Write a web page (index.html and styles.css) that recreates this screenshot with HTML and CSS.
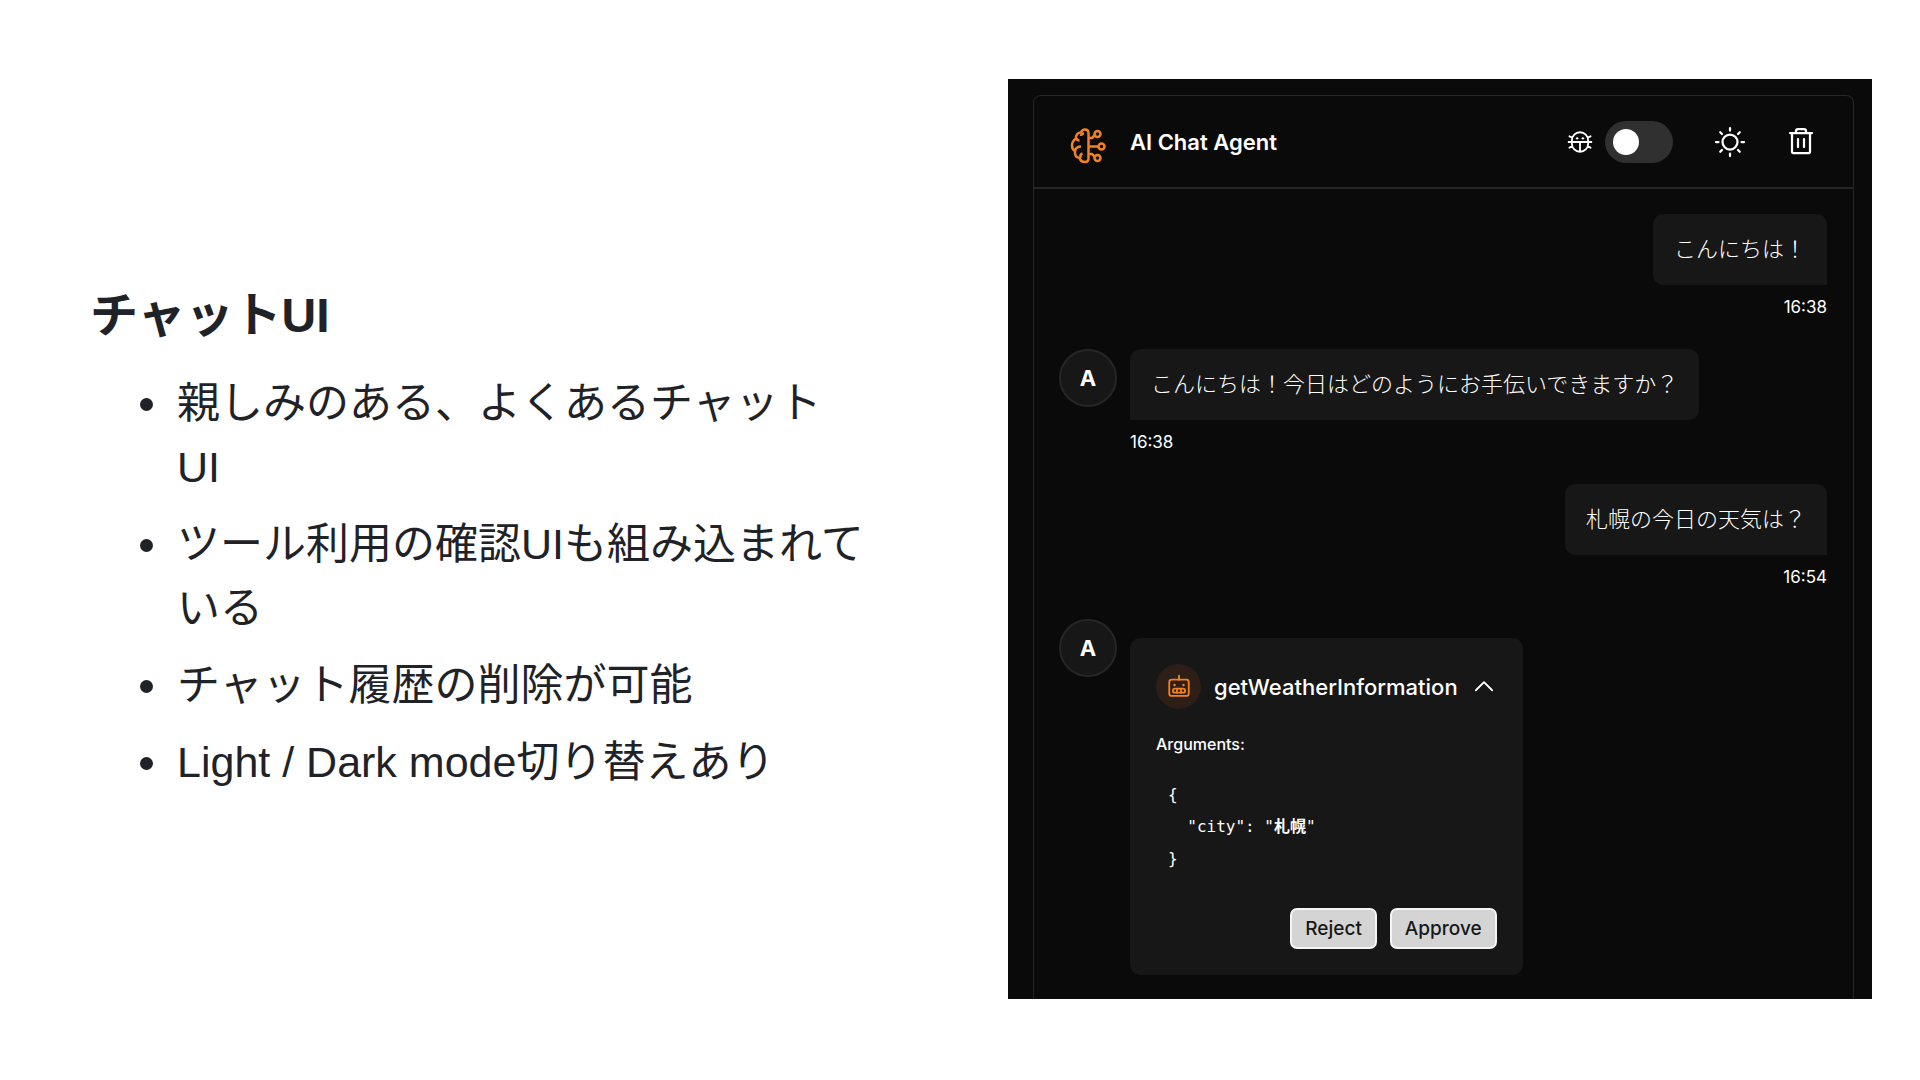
FILE: index.html
```html
<!DOCTYPE html>
<html lang="ja">
<head>
  <meta charset="UTF-8" />
  <meta name="viewport" content="width=device-width, initial-scale=1.0" />
  <title>チャットUI</title>
  <link rel="stylesheet" href="styles.css">
</head>
<body>
  <main class="slide">
    <section class="notes">
      <h1>チャットUI</h1>
      <ul>
        <li>親しみのある、よくあるチャット<br>UI</li>
        <li>ツール利用の確認UIも組み込まれている</li>
        <li>チャット履歴の削除が可能</li>
        <li>Light / Dark mode切り替えあり</li>
      </ul>
    </section>

    <section class="screen">
      <div class="chat">
        <header class="chat-header">
          <svg class="logo" viewBox="0 0 36 36">
            <path d="M18.500 5.500c0-2.500-1.500-4-3.500-4-2.500 0-3.500 1.500-4 3-3.500 0-5.500 2.500-5 6-2.500 1.500-4 4-4 7 0 2.500 1 4.500 3 5.500-.5 4 1 6.500 4.500 7 1 3 3 4 5.500 4s3.500-1.500 3.500-4z" />
            <path d="M14 5.500c-1.500 0-3 1-3 2.500M6 10.500c1 1.500 2 2 3.500 2M11 18.500c-3 0-5 1-6 4M10.500 30c-.5-2.500 0-4 2-4.500M18.500 10h3.500l3-3M18.500 18.500h10M18.500 26h3.500l3 3" />
            <circle cx="27.500" cy="6" r="3" />
            <circle cx="31.500" cy="18.500" r="3" />
            <circle cx="27.500" cy="30" r="3" />
          </svg>
          <h2>AI Chat Agent</h2>
          <label class="debug">
            <svg class="icon small" viewBox="0 0 256 256">
              <path d="M208 144a80 80 0 0 1-160 0v-32a80 80 0 0 1 160 0zM16 128h224M128 128v96M232 184l-29-12M232 72l-29 12M24 72l29 12M24 184l29-12" />
              <circle class="dot" cx="100" cy="92" r="12" />
              <circle class="dot" cx="156" cy="92" r="12" />
            </svg>
            <input type="checkbox" class="toggle" aria-label="Debug" />
          </label>
          <button class="icon-button theme" aria-label="Theme">
            <svg class="icon" viewBox="0 0 256 256">
              <circle cx="128" cy="128" r="60" />
              <path d="M128 36V16M64 64L50 50M64 192l-14 14M192 64l14-14M192 192l14 14M36 128H16M128 220v20M220 128h20" />
            </svg>
          </button>
          <button class="icon-button" aria-label="Clear history">
            <svg class="icon" viewBox="0 0 256 256">
              <path d="M216 56H40M104 104v64M152 104v64M200 56v152a8 8 0 0 1-8 8H64a8 8 0 0 1-8-8V56M168 56V40a16 16 0 0 0-16-16h-48a16 16 0 0 0-16 16v16" />
            </svg>
          </button>
        </header>

        <div class="messages">
          <div class="message mine">
            <p class="bubble">こんにちは！</p>
            <time>16:38</time>
          </div>
          <div class="message">
            <div class="avatar">A</div>
            <div>
              <p class="bubble">こんにちは！今日はどのようにお手伝いできますか？</p>
              <time>16:38</time>
            </div>
          </div>
          <div class="message mine">
            <p class="bubble">札幌の今日の天気は？</p>
            <time>16:54</time>
          </div>
          <div class="message">
            <div class="avatar">A</div>
            <div class="tool">
              <div class="tool-header">
                <span class="tool-icon">
                  <svg class="icon small" viewBox="0 0 256 256">
                    <rect x="32" y="56" width="192" height="160" rx="24" />
                    <rect x="68" y="144" width="120" height="40" rx="20" />
                    <path d="M148 144v40M108 144v40M128 56V16" />
                    <circle class="dot" cx="84" cy="108" r="12" />
                    <circle class="dot" cx="172" cy="108" r="12" />
                  </svg>
                </span>
                <h3>getWeatherInformation</h3>
                <button class="icon-button" aria-label="Collapse">
                  <svg class="icon small" viewBox="0 0 256 256">
                    <path d="M48 160l80-80 80 80" />
                  </svg>
                </button>
              </div>
              <h4>Arguments:</h4>
<pre>{
  "city": "<b>札幌</b>"
}</pre>
              <div class="actions">
                <button>Reject</button>
                <button>Approve</button>
              </div>
            </div>
          </div>
        </div>
      </div>
    </section>
  </main>
</body>
</html>
```

FILE: styles.css
```css
* {
  box-sizing: border-box;
}

body,
h1,
h2,
h3,
h4,
p,
pre,
ul {
  margin: 0;
}

body {
  background: #fff;
  color: #1f2328;
  font-family: "Liberation Sans", "Noto Sans CJK JP", sans-serif;
}

.slide {
  display: grid;
  grid-template-columns: 1fr 45vw;
  gap: 128px;
  min-height: 100vh;
  padding: 79px 48px 81px 90px;
}

.notes {
  align-self: center;
  padding-bottom: 4px;
}

.notes h1 {
  font-size: 48px;
  line-height: 72px;
  margin-bottom: 19px;
}

.notes ul {
  padding-left: 83px;
  font-size: 43px;
  line-height: 64px;
}

.notes li {
  padding-left: 4px;
}

.notes li + li {
  margin-top: 13px;
}

.screen {
  display: flex;
  padding: 16px 18px 0 25px;
  background: #0a0a0a;
  color: #fff;
  font-family: Inter, "Noto Sans CJK JP", sans-serif;
}

.chat {
  flex: 1;
  border: 1px solid #262626;
  border-bottom: 0;
  border-radius: 8px 8px 0 0;
}

.chat-header {
  display: flex;
  align-items: center;
  height: 93px;
  padding: 0 36px;
  border-bottom: 2px solid #262626;
}

.chat-header h2 {
  flex: 1;
  margin-left: 24px;
  font-size: 22px;
  font-weight: 600;
}

.logo {
  width: 36px;
  height: 36px;
  margin-top: 8px;
  fill: none;
  stroke: #f48120;
  stroke-width: 2.5;
}

.icon {
  display: block;
  width: 32px;
  height: 32px;
  fill: none;
  stroke: currentColor;
  stroke-width: 18;
  stroke-linecap: round;
  stroke-linejoin: round;
}

.icon.small {
  width: 26px;
  height: 26px;
}

.icon .dot {
  fill: currentColor;
  stroke: none;
}

.icon-button {
  padding: 0;
  border: 0;
  background: none;
  color: inherit;
}

.debug {
  display: flex;
  align-items: center;
  gap: 12px;
}

.toggle {
  appearance: none;
  display: flex;
  align-items: center;
  width: 68px;
  height: 42px;
  margin: 0;
  padding: 8px;
  border-radius: 21px;
  background: #303030;
}

.toggle::before {
  content: "";
  width: 26px;
  height: 26px;
  border-radius: 50%;
  background: #fff;
}

.toggle:checked {
  justify-content: flex-end;
}

.theme {
  margin: 0 39px 0 41px;
}

.messages {
  display: flex;
  flex-direction: column;
  gap: 32px;
  padding: 25px 26px 24px 25px;
}

.message {
  display: flex;
  align-items: flex-start;
  gap: 13px;
}

.message.mine {
  flex-direction: column;
  align-items: flex-end;
  gap: 0;
}

.bubble {
  padding: 18px 21px;
  border-radius: 10px 10px 10px 0;
  background: #171717;
  font-size: 22px;
  font-weight: 300;
  line-height: 35px;
}

.mine .bubble {
  border-radius: 10px 10px 0 10px;
}

time {
  display: block;
  margin-top: 12px;
  font-size: 17px;
  line-height: 20px;
}

.avatar {
  display: flex;
  align-items: center;
  justify-content: center;
  width: 58px;
  height: 58px;
  border: 2px solid #262626;
  border-radius: 50%;
  background: #171717;
  font-size: 22px;
  font-weight: 700;
}

.tool {
  margin-top: 19px;
  padding: 26px;
  border-radius: 10px;
  background: #171717;
}

.tool-header {
  display: flex;
  align-items: center;
  gap: 13px;
}

.tool-icon {
  display: flex;
  align-items: center;
  justify-content: center;
  width: 45px;
  height: 45px;
  border-radius: 50%;
  background: #2d1f17;
  color: #f48120;
}

.tool h3 {
  font-size: 22px;
  font-weight: 500;
}

.tool h4 {
  margin-top: 24px;
  font-size: 16px;
  font-weight: 500;
  line-height: 22px;
}

.tool pre {
  padding: 24px 12px 33px;
  font-family: "DejaVu Sans Mono", "Noto Sans CJK JP", monospace;
  font-size: 16px;
  line-height: 32px;
}

.actions {
  display: flex;
  justify-content: flex-end;
  gap: 13px;
}

.actions button {
  height: 41px;
  padding: 0 13px;
  border: 2px solid #f5f5f5;
  border-radius: 7px;
  background: #d4d4d4;
  color: #171717;
  font-family: inherit;
  font-size: 19px;
  font-weight: 500;
}
```
